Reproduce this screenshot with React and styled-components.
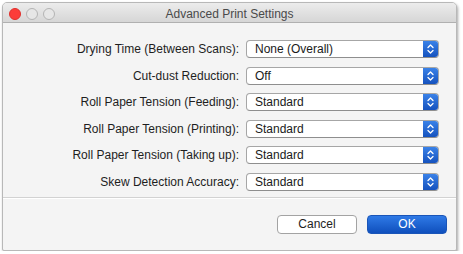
import React from "react";
import styled, { createGlobalStyle } from "styled-components";

const Global = createGlobalStyle`
  html, body {
    margin: 0;
    padding: 0;
    background: #ffffff;
    font-family: "Liberation Sans", Arial, sans-serif;
  }
`;

const rows = [
  { label: "Drying Time (Between Scans):", value: "None (Overall)" },
  { label: "Cut-dust Reduction:", value: "Off" },
  { label: "Roll Paper Tension (Feeding):", value: "Standard" },
  { label: "Roll Paper Tension (Printing):", value: "Standard" },
  { label: "Roll Paper Tension (Taking up):", value: "Standard" },
  { label: "Skew Detection Accuracy:", value: "Standard" },
];

const App = () => {
  return (
    <>
      <Global />
      <Window>
        <TitleBar>
          <Lights>
            <Light $color="#fc3d39" $border="#e0302c" />
            <Light $color="#e6e6e6" $border="#b4b4b4" />
            <Light $color="#e6e6e6" $border="#b4b4b4" />
          </Lights>
          <Title>Advanced Print Settings</Title>
        </TitleBar>
        <Content>
          <Form>
            {rows.map((r) => (
              <React.Fragment key={r.label}>
                <Label>{r.label}</Label>
                <Select>
                  <SelectText>{r.value}</SelectText>
                  <Stepper>
                    <svg width="7" height="12" viewBox="0 0 7 12">
                      <path
                        d="M1 4.5 L3.5 2 L6 4.5 M1 7.5 L3.5 10 L6 7.5"
                        fill="none"
                        stroke="#ffffff"
                        strokeWidth="1.3"
                        strokeLinecap="round"
                        strokeLinejoin="round"
                      />
                    </svg>
                  </Stepper>
                </Select>
              </React.Fragment>
            ))}
          </Form>
          <Footer>
            <Button>Cancel</Button>
            <Button $primary>OK</Button>
          </Footer>
        </Content>
      </Window>
    </>
  );
};

export default App;

const Window = styled.div`
  margin: 2px 0 0 2px;
  width: 455px;
  height: 249px;
  border: 1px solid #b8b8b8;
  border-radius: 5px 5px 2px 2px;
  background: #f4f4f4;
  box-shadow: 1px 2px 3px rgba(0, 0, 0, 0.35);
  display: flex;
  flex-direction: column;
  overflow: hidden;
  box-sizing: border-box;
`;

const TitleBar = styled.div`
  position: relative;
  height: 19px;
  flex: none;
  background: linear-gradient(#ececec, #d6d6d6);
  border-bottom: 1px solid #b0b0b0;
  display: flex;
  align-items: center;
  justify-content: center;
`;

const Lights = styled.div`
  position: absolute;
  left: 6px;
  top: 5px;
  display: flex;
  gap: 5px;
`;

const Light = styled.span`
  width: 12px;
  height: 12px;
  border-radius: 50%;
  background: ${(p) => p.$color};
  border: 1px solid ${(p) => p.$border};
  box-sizing: border-box;
`;

const Title = styled.div`
  font-size: 12px;
  color: #4a4a4a;
  margin-top: 3px;
`;

const Content = styled.div`
  flex: 1;
  display: flex;
  flex-direction: column;
`;

const Form = styled.div`
  display: grid;
  grid-template-columns: 236px 193px;
  grid-auto-rows: 18px;
  row-gap: 8.6px;
  column-gap: 7px;
  align-items: center;
  padding: 17px 0 6px 0;
  border-bottom: 1px solid #d2d2d2;
  box-shadow: 0 1px 0 #ffffff;
`;

const Label = styled.div`
  text-align: right;
  font-size: 12px;
  color: #1e1e1e;
  white-space: nowrap;
`;

const Select = styled.div`
  height: 18px;
  display: flex;
  background: #ffffff;
  border: 1px solid #a6a6a6;
  border-bottom-color: #8e8e8e;
  border-radius: 4px;
  box-sizing: border-box;
  overflow: hidden;
`;

const SelectText = styled.div`
  flex: 1;
  font-size: 12px;
  line-height: 16px;
  color: #1a1a1a;
  padding-left: 8px;
`;

const Stepper = styled.div`
  width: 15px;
  flex: none;
  background: linear-gradient(#3a82e8, #1552be);
  display: flex;
  align-items: center;
  justify-content: center;
`;

const Footer = styled.div`
  display: flex;
  justify-content: flex-end;
  gap: 10px;
  padding: 17px 9px 0 0;
`;

const Button = styled.button`
  width: 80px;
  height: 19px;
  padding: 0;
  font-family: "Liberation Sans", Arial, sans-serif;
  font-size: 12px;
  border-radius: 4px;
  box-sizing: border-box;
  color: ${(p) => (p.$primary ? "#ffffff" : "#1e1e1e")};
  background: ${(p) =>
    p.$primary ? "linear-gradient(#2f7ae6, #0f4fbd)" : "#ffffff"};
  border: 1px solid ${(p) => (p.$primary ? "#1a55b8" : "#a3a3a3")};
`;
